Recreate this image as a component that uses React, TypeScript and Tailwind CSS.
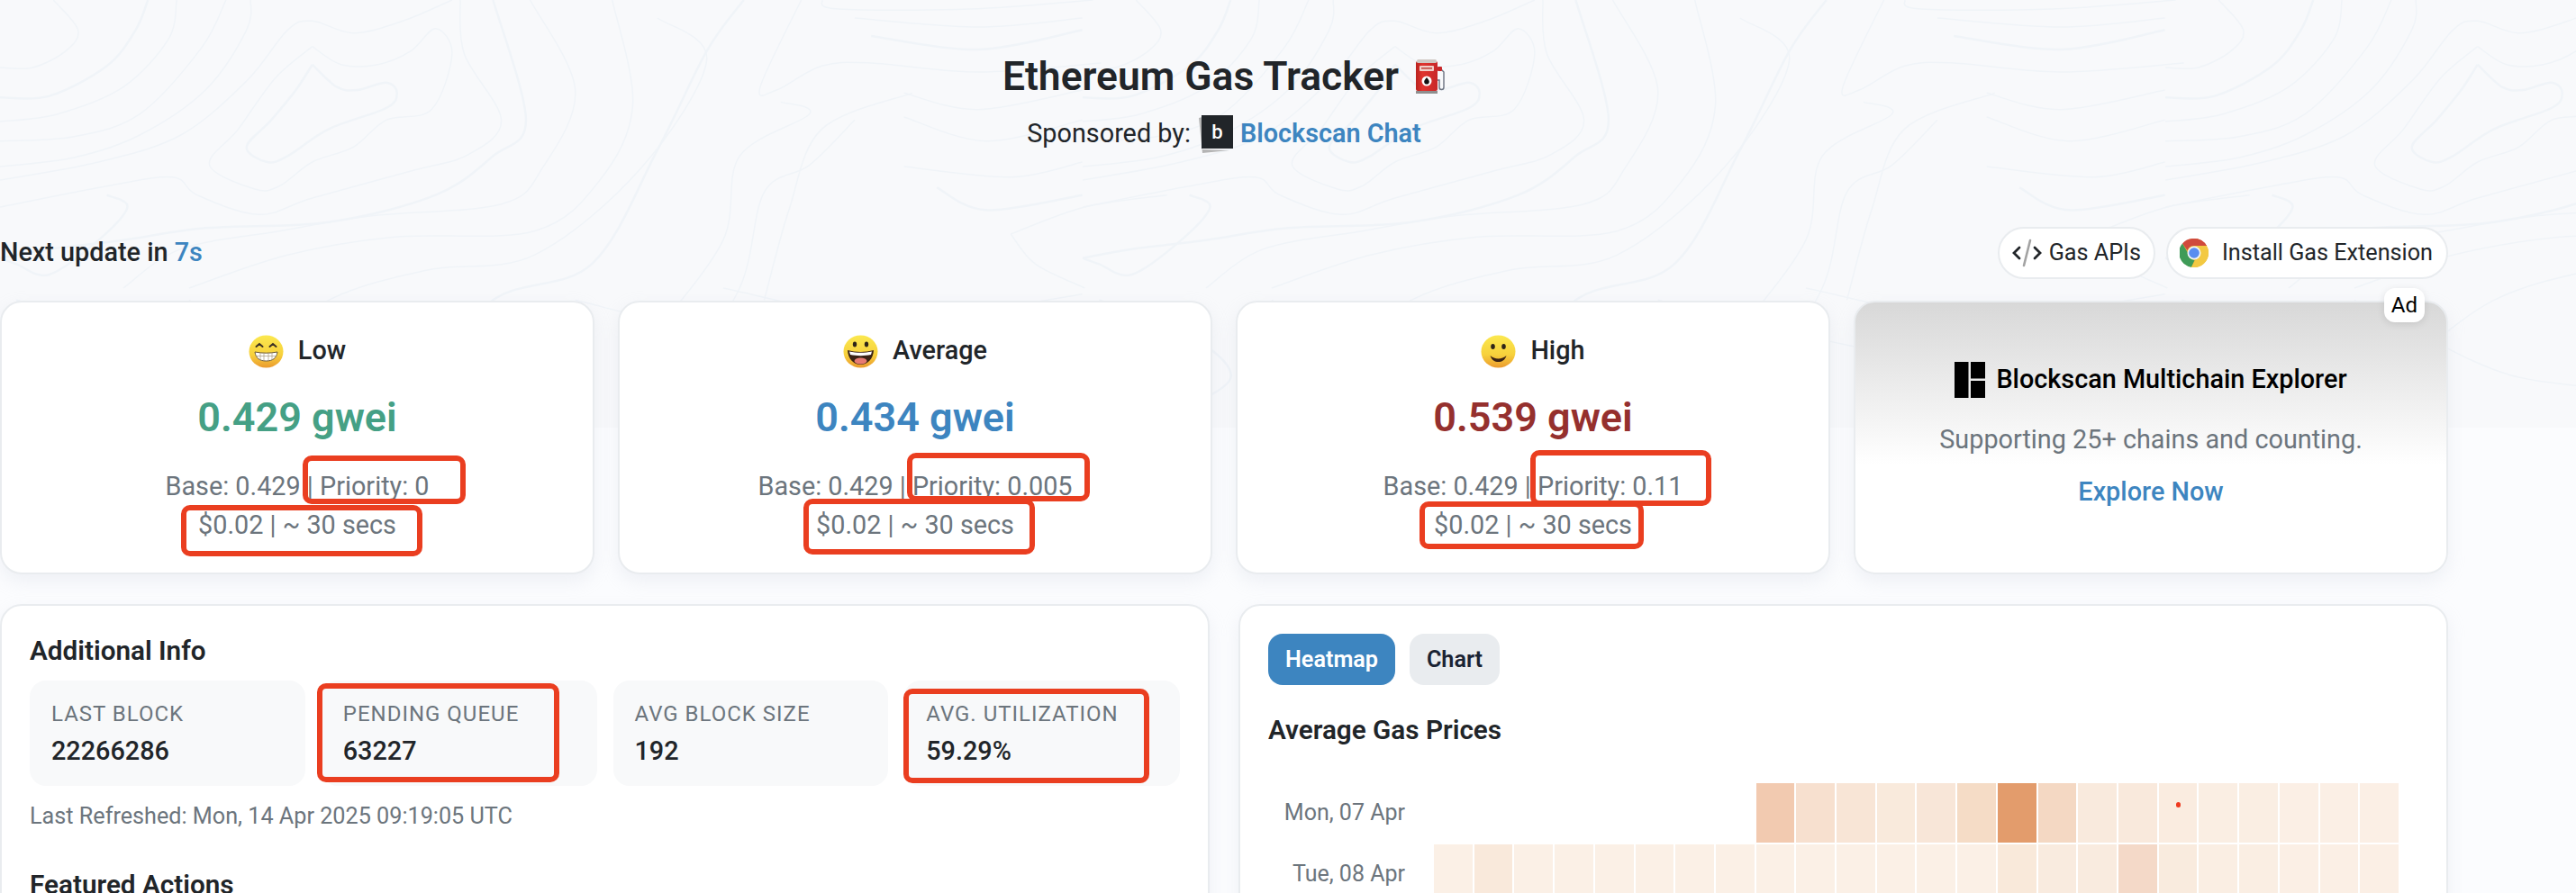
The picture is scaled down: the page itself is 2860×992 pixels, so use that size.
import React from 'react';

// contour lines, in coords read off the reference, stretched to real px in toPath
const contours: number[][][] = [
    [[0, 225], [40, 225], [80, 170], [95, 100], [65, 0]],
    [[0, 325], [60, 320], [130, 220], [165, 100], [180, 0]],
    [[0, 405], [70, 380], [150, 290], [205, 130], [215, 0]],
    [[0, 470], [90, 455], [170, 380], [245, 160], [275, 0]],
    [[0, 555], [90, 525], [170, 450], [250, 300], [300, 100], [305, 0]],
    [[380, 215], [410, 290], [435, 300], [470, 275], [483, 310], [470, 360], [400, 430], [350, 520], [325, 540], [300, 490], [330, 400], [360, 300], [380, 215]],
    [[380, 155], [415, 215], [460, 215], [500, 170], [530, 95], [550, 180], [525, 365], [470, 400], [430, 490], [380, 540], [340, 620], [310, 630], [255, 550], [290, 430], [335, 260], [380, 155]],
    [[0, 600], [120, 540], [220, 450], [300, 270], [350, 100], [380, 70], [430, 110], [490, 70], [550, 0]],
    [[0, 690], [130, 620], [210, 590], [240, 650], [315, 715], [380, 660], [500, 570], [570, 515], [610, 400], [565, 180], [560, 0]],
    [[600, 0], [640, 400], [600, 520], [530, 650], [400, 740], [250, 760], [150, 800], [60, 830], [0, 860]],
    [[645, 0], [700, 300], [660, 560], [610, 680], [450, 720], [340, 770], [220, 830], [150, 960]],
    [[745, 0], [770, 350], [730, 600], [650, 770], [480, 790], [350, 850], [230, 960]],
    [[800, 60], [860, 200], [780, 560], [650, 850], [520, 900], [400, 1000], [300, 1200]],
    [[905, 0], [860, 170], [800, 500], [720, 880], [600, 1000], [500, 1300]],
    [[975, 0], [925, 290], [945, 300], [1000, 220], [1060, 210], [1190, 240], [1340, 210]],
    [[1000, 0], [1020, 30], [1180, 30], [1330, 0]],
    [[1040, 60], [1190, 90], [1317, 60]],
    [[1060, 120], [1190, 165], [1317, 100]],
    [[1100, 310], [1190, 365], [1317, 300]],
    [[1100, 390], [1200, 470], [1317, 400]],
    [[1100, 555], [1230, 590], [1317, 540]],
    [[1140, 625], [1200, 700], [1317, 650]],
    [[950, 340], [985, 380], [900, 520], [880, 800], [800, 1100]],
    [[1040, 400], [985, 550], [930, 640], [900, 960], [820, 1300]],
    [[1110, 310], [1000, 430], [960, 700], [930, 1000]],
    [[130, 650], [155, 690], [120, 800], [60, 915], [20, 880], [0, 860]],
    [[1230, 780], [1320, 690], [1420, 650]],
    [[1230, 780], [1260, 880], [1320, 960]],
    [[230, 1000], [300, 1100], [420, 1250], [560, 1300]],
    [[20, 1000], [120, 1100], [180, 1260], [90, 1400]],
    [[700, 1000], [880, 1120], [1100, 1230], [1317, 1200]],
    [[880, 960], [1100, 1080], [1230, 1020], [1317, 980]],
];

const toPath = (pts: number[][]) => {
    // catmull-rom through the points
    const p = pts.map(([x, y]) => [x / 1.096, y / 3]);
    let d = `M${p[0][0]} ${p[0][1]}`;
    for (let i = 0; i < p.length - 1; i++) {
        const a = p[i - 1] || p[i];
        const b = p[i];
        const c = p[i + 1];
        const e = p[i + 2] || c;
        d += ` C${b[0] + (c[0] - a[0]) / 6} ${b[1] + (c[1] - a[1]) / 6} ${c[0] - (e[0] - b[0]) / 6} ${c[1] - (e[1] - b[1]) / 6} ${c[0]} ${c[1]}`;
    }
    return d;
};

function TopoBackground() {
    return (
        <div className="absolute inset-x-0 top-0 h-[475px] bg-[#f8f9fb] overflow-hidden">
            <svg width="2860" height="475" fill="none">
                {[0, 1202, 2404].map((dx) => (
                    <g key={dx} transform={`translate(${dx} 0)`}>
                        {contours.map((pts, i) => (
                            <path key={i} d={toPath(pts)} stroke="#f0f4f8" strokeWidth={i % 4 === 1 ? 2.5 : 1.5} />
                        ))}
                    </g>
                ))}
            </svg>
        </div>
    );
}

function FuelPump() {
    return (
        <svg width="34" height="38" viewBox="0 0 34 38">
            <defs>
                <linearGradient id="pump" x1="0" y1="0" x2="1" y2="0">
                    <stop offset="0" stopColor="#b9221f" />
                    <stop offset="0.300" stopColor="#e0352f" />
                    <stop offset="1" stopColor="#c8282a" />
                </linearGradient>
            </defs>
            <path d="M25 10h3l4 4v17a2.500 2.500 0 0 1-5 0v-8h-2" fill="none" stroke="#6b7280" strokeWidth="1.400" />
            <rect x="25" y="8" width="5" height="5" rx="1" fill="#c8282a" />
            <rect x="1" y="2" width="24" height="33" rx="2" fill="url(#pump)" />
            <rect x="2" y="0" width="22" height="4" rx="1.500" fill="#cfc9c4" />
            <rect x="5" y="7" width="16" height="6" rx="1" fill="#f1cfc9" />
            <rect x="7" y="9" width="12" height="1.600" fill="#c04a42" />
            <circle cx="13" cy="24" r="5.500" fill="#fff" />
            <path d="M13 20c1.800 2.300 2.800 3.500 2.800 4.800a2.800 2.800 0 0 1-5.600 0c0-1.300 1-2.500 2.800-4.800z" fill="#111" />
            <rect x="1" y="35" width="24" height="3" fill="#8f8f8f" />
        </svg>
    );
}

function BlockscanB() {
    return (
        <svg width="38" height="42" viewBox="0 0 38 42">
            <path d="M0 3l4-1v36l30 1 -30 3z" fill="#b4b4b4" />
            <rect x="3" y="0" width="35" height="37" fill="#212529" />
            <text x="20.500" y="26" textAnchor="middle" fontSize="22" fontWeight="500" fill="#fff" fontFamily="Roboto, sans-serif">b</text>
        </svg>
    );
}

function CodeIcon() {
    return (
        <svg width="33" height="34" viewBox="0 0 33 34" fill="none" strokeLinecap="round">
            <path d="M8 11l-6 6 6 6M25 11l6 6-6 6" stroke="#212529" strokeWidth="2.800" />
            <path d="M20 3l-7 28" stroke="#a3a3a3" strokeWidth="2.600" />
        </svg>
    );
}

function ChromeIcon() {
    return (
        <svg width="32" height="32" viewBox="0 0 32 32">
            <circle cx="16" cy="16" r="16" fill="#e9b93a" />
            <path d="M16 0a16 16 0 0 1 13.860 8H16a8 8 0 0 0-7.500 5.200L3 5.500A16 16 0 0 1 16 0z" fill="#d04a3c" />
            <path d="M3 5.500l7 12.100a8 8 0 0 0 6.500 6.400L13 31.700A16 16 0 0 1 3 5.500z" fill="#3f9b58" />
            <path d="M16 0a16 16 0 0 1 13.860 8H16z" fill="#d04a3c" />
            <path d="M29.860 8A16 16 0 0 1 13 31.700l6.800-11.800A8 8 0 0 0 22 12l-6-4z" fill="#f3c942" />
            <circle cx="16" cy="16" r="7.500" fill="#f4f4f4" />
            <circle cx="16" cy="16" r="5.800" fill="#5a8df0" />
        </svg>
    );
}

function Emoji({ kind }: { kind: 'low' | 'avg' | 'high' }) {
    return (
        <svg width="39" height="37" viewBox="0 0 39 37">
            <defs>
                <linearGradient id={`face-${kind}`} x1="0" y1="0" x2="0" y2="1">
                    <stop offset="0" stopColor="#fbe84f" />
                    <stop offset="0.600" stopColor="#f7d13c" />
                    <stop offset="1" stopColor="#eb9a2e" />
                </linearGradient>
            </defs>
            <ellipse cx="19.500" cy="18.500" rx="19" ry="18" fill={`url(#face-${kind})`} />
            {kind === 'low' && (
                <>
                    <path d="M8.500 13l3.500-3 3.500 3M23.500 13l3.500-3 3.500 3" fill="none" stroke="#3b3024" strokeWidth="2" strokeLinecap="round" />
                    <path d="M7 19c8 1.600 17 1.600 25 0-1 7-5.500 10-12.500 10S8 26 7 19z" fill="#fff" stroke="#6b5a3c" strokeWidth="1" />
                    <path d="M8 23.500h23M13 20v8M17 20.500v8.500M22 20.500v8.500M26 20v8" stroke="#a89a80" strokeWidth="0.700" />
                </>
            )}
            {kind === 'avg' && (
                <>
                    <ellipse cx="13" cy="10.500" rx="2.200" ry="3" fill="#2d2418" />
                    <ellipse cx="26" cy="10.500" rx="2.200" ry="3" fill="#2d2418" />
                    <path d="M5 17c9 2.500 20 2.500 29 0-.5 10-7 16-14.500 16S5.500 27 5 17z" fill="#3a2214" />
                    <path d="M7 18.500c8 1.800 17 1.800 25 0l-1 3.500c-7 1.500-16 1.500-23 0z" fill="#fff" />
                    <ellipse cx="19.500" cy="29" rx="7" ry="3.500" fill="#e87a72" />
                </>
            )}
            {kind === 'high' && (
                <>
                    <ellipse cx="13.500" cy="13" rx="2.300" ry="3" fill="#2d2418" />
                    <ellipse cx="25.500" cy="13" rx="2.300" ry="3" fill="#2d2418" />
                    <path d="M10.500 23c5 4.500 13 4.500 18 0-2 5.500-5 7-9 7s-7-1.500-9-7z" fill="#3a2214" />
                </>
            )}
        </svg>
    );
}

function GasCard({ kind, label, price, color, priority }: { kind: 'low' | 'avg' | 'high'; label: string; price: string; color: string; priority: string }) {
    return (
        <div className="flex flex-col items-center rounded-[24px] border-2 border-[#e9ecef] bg-white pt-[34px] shadow-[0_8px_20px_rgba(189,197,209,0.2)]">
            <div className="flex h-[40px] items-center gap-[16px]">
                <Emoji kind={kind} />
                <span className="text-[28.8px] font-medium text-[#212529]">{label}</span>
            </div>
            <div className={`mt-[25px] text-[45px] leading-[58px] font-semibold ${color}`}>{price}</div>
            <div className="mt-[26px] text-center text-[28.8px] leading-[43px] text-[#6c757d]">
                <div>Base: 0.429 | Priority: {priority}</div>
                <div>$0.02 | ~ 30 secs</div>
            </div>
        </div>
    );
}

function Stat({ label, value }: { label: string; value: string }) {
    return (
        <div className="rounded-[18px] bg-[#f8f9fa] px-[24px] pt-[22px] pb-[19px]">
            <div className="text-[24px] leading-[30px] tracking-[1px] text-[#6c757d]">{label}</div>
            <div className="mt-[6px] text-[28.8px] leading-[40px] font-medium text-[#212529]">{value}</div>
        </div>
    );
}

// red marks someone drew on the screenshot
const marks = [
    'left-[336px] top-[506px] w-[181px] h-[54px]',
    'left-[201px] top-[561px] w-[268px] h-[57px]',
    'left-[1007px] top-[503px] w-[203px] h-[54px]',
    'left-[892px] top-[554px] w-[257px] h-[62px]',
    'left-[1699px] top-[500px] w-[201px] h-[62px]',
    'left-[1576px] top-[557px] w-[249px] h-[53px]',
    'left-[352px] top-[759px] w-[269px] h-[110px]',
    'left-[1003px] top-[765px] w-[273px] h-[105px]',
];

const row1 = ['#f2cab0', '#f7e0cf', '#f8e5d6', '#f9eadc', '#f8e6d8', '#f5dcc6', '#e39c6c', '#f4d8c3', '#f9eadd', '#f9e9dc', '#faece0', '#faeee3', '#faeee3', '#fbefe5', '#fbefe5', '#fbefe5'];
const row2 = ['#fbf0e6', '#f9e9db', '#fbf0e6', '#fbf0e6', '#fbf0e6', '#fbf0e6', '#fbf0e6', '#fbf0e6', '#fbf0e6', '#fbf0e6', '#fbf0e6', '#fbf0e6', '#fbf0e6', '#fbf0e6', '#f9e9da', '#f9ebdf', '#f9ebdf', '#f4d9c8', '#f9ebde', '#faeee3', '#faeee3', '#fbefe5', '#fbefe5', '#fbefe5'];

function HeatRow({ label, cells }: { label: string; cells: string[] }) {
    return (
        <div className="flex h-[66px] items-center">
            <div className="w-[152px] text-right text-[25px] whitespace-nowrap text-[#6c757d]">{label}</div>
            <div className="ml-[32px] grid h-full w-[1071px] grid-cols-24 gap-x-[2px]">
                {cells.map((c, i) => (
                    <div key={i} className="h-full" style={{ backgroundColor: c, gridColumnStart: 25 - cells.length + i }} />
                ))}
            </div>
        </div>
    );
}

export default function App() {
    return (
        <div className="relative h-[992px] w-[2860px] overflow-hidden bg-[#fbfcfe] font-['Roboto',sans-serif]">
            <TopoBackground />
            <div className="relative w-[2718px]">
                <div className="flex flex-col items-center pt-[56px]">
                    <div className="flex items-center gap-[18px]">
                        <h1 className="text-[44.4px] leading-[58px] font-semibold text-[#212529]">Ethereum Gas Tracker</h1>
                        <FuelPump />
                    </div>
                    <div className="mt-[14px] flex h-[42px] items-center text-[28.8px] text-[#212529]">
                        Sponsored by:
                        <span className="mr-[8px] ml-[9px]"><BlockscanB /></span>
                        <a className="font-semibold text-[#3d85c0]">Blockscan Chat</a>
                    </div>
                </div>
                <div className="mt-[82px] flex h-[58px] items-center justify-between">
                    <div className="text-[28.8px] font-medium text-[#212529]">
                        Next update in <span className="text-[#3d85c0]">7s</span>
                    </div>
                    <div className="flex gap-[12px]">
                        <div className="flex h-[58px] items-center gap-[8px] rounded-full border-2 border-[#e9ecef] bg-white pr-[14px] pl-[14px] text-[25.2px] text-[#212529]">
                            <CodeIcon />
                            Gas APIs
                        </div>
                        <div className="flex h-[58px] items-center gap-[15px] rounded-full border-2 border-[#e9ecef] bg-white pr-[15px] pl-[13px] text-[25.2px] text-[#212529]">
                            <ChromeIcon />
                            Install Gas Extension
                        </div>
                    </div>
                </div>
                <div className="mt-[24px] grid h-[304px] grid-cols-4 gap-[26px]">
                    <GasCard kind="low" label="Low" price="0.429 gwei" color="text-[#45a085]" priority="0" />
                    <GasCard kind="avg" label="Average" price="0.434 gwei" color="text-[#3d85c0]" priority="0.005" />
                    <GasCard kind="high" label="High" price="0.539 gwei" color="text-[#95302e]" priority="0.11" />
                    <div className="relative flex flex-col items-center rounded-[24px] border-2 border-[#e9ecef] bg-gradient-to-b from-[#d8d8d8] via-white via-[60%] to-white pt-[66px] shadow-[0_8px_20px_rgba(189,197,209,0.2)]">
                        <div className="absolute top-[-16px] right-[24px] rounded-[12px] bg-white px-[8px] py-[3px] text-[24px] leading-[32px] text-black shadow-[0_2px_8px_rgba(0,0,0,0.1)]">Ad</div>
                        <div className="flex h-[40px] items-center gap-[12px] text-[28.8px] font-medium text-black">
                            <svg width="34" height="40" viewBox="0 0 34 40" fill="#000">
                                <rect width="15.500" height="40" />
                                <rect x="18" width="16" height="18.500" />
                                <rect x="18" y="21" width="16" height="19" />
                            </svg>
                            Blockscan Multichain Explorer
                        </div>
                        <div className="mt-[26px] text-[28.8px] leading-[40px] text-[#6c757d]">Supporting 25+ chains and counting.</div>
                        <div className="mt-[18px] text-[28.8px] leading-[40px] font-medium text-[#3d85c0]">Explore Now</div>
                    </div>
                </div>
                <div className="mt-[33px] grid h-[500px] grid-cols-2 gap-[32px]">
                    <div className="rounded-[24px] border-2 border-[#e9ecef] bg-white px-[31px] pt-[30px] shadow-[0_8px_20px_rgba(189,197,209,0.2)]">
                        <h2 className="text-[29.7px] leading-[40px] font-semibold text-[#212529]">Additional Info</h2>
                        <div className="mt-[13px] grid grid-cols-4 gap-[18px]">
                            <Stat label="LAST BLOCK" value="22266286" />
                            <Stat label="PENDING QUEUE" value="63227" />
                            <Stat label="AVG BLOCK SIZE" value="192" />
                            <Stat label="AVG. UTILIZATION" value="59.29%" />
                        </div>
                        <div className="mt-[19px] text-[25.2px] leading-[30px] text-[#6c757d]">Last Refreshed: Mon, 14 Apr 2025 09:19:05 UTC</div>
                        <h2 className="mt-[41px] text-[29.7px] leading-[40px] font-semibold text-[#212529]">Featured Actions</h2>
                    </div>
                    <div className="relative rounded-[24px] border-2 border-[#e9ecef] bg-white px-[31px] pt-[31px] shadow-[0_8px_20px_rgba(189,197,209,0.2)]">
                        <div className="flex gap-[16px]">
                            <div className="flex h-[57px] w-[141px] items-center justify-center rounded-[16px] bg-[#3d85c0] text-[25.2px] font-semibold text-white">Heatmap</div>
                            <div className="flex h-[57px] w-[100px] items-center justify-center rounded-[16px] bg-[#e9ecef] text-[25.2px] font-semibold text-[#1a2333]">Chart</div>
                        </div>
                        <h2 className="mt-[30px] text-[29.7px] leading-[40px] font-semibold text-[#212529]">Average Gas Prices</h2>
                        <div className="mt-[39px] flex flex-col gap-[2px]">
                            <HeatRow label="Mon, 07 Apr" cells={row1} />
                            <HeatRow label="Tue, 08 Apr" cells={row2} />
                        </div>
                        <div className="absolute top-[218px] left-[1039px] h-[6px] w-[5px] rounded-full bg-[#ef3a1f]" />
                    </div>
                </div>
            </div>
            {marks.map((m) => (
                <div key={m} className={`absolute rounded-[10px] border-[6px] border-[#ea3e20] ${m}`} />
            ))}
        </div>
    );
}
